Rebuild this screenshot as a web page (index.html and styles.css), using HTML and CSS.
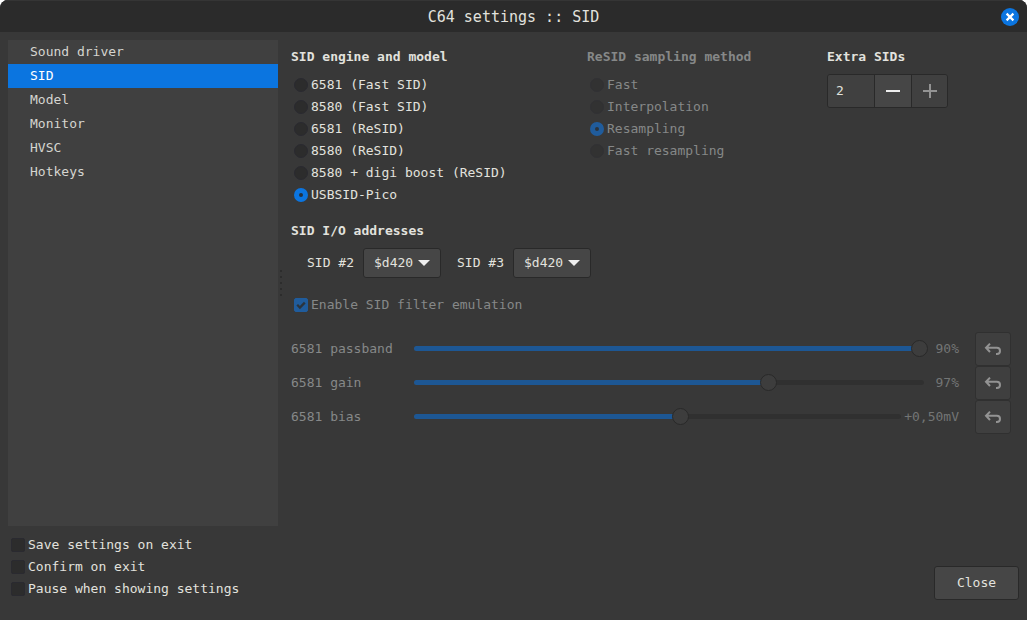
FILE: index.html
```html
<!DOCTYPE html>
<html lang="en">
<head>
<meta charset="utf-8">
<meta name="viewport" content="width=device-width, initial-scale=1">
<title>C64 settings :: SID</title>
<link rel="stylesheet" href="styles.css">
</head>
<body>
<div class="window">
  <header class="titlebar">
    <h1 class="title">C64 settings :: SID</h1>
    <button class="window-close" type="button" aria-label="Close window">
      <svg width="18" height="18" viewBox="0 0 18 18"><circle cx="9" cy="9" r="9" fill="#0b75e0"/><path d="M5.6 5.6l6.8 6.8M12.4 5.6l-6.8 6.8" stroke="#fff" stroke-width="2.2" fill="none"/></svg>
    </button>
  </header>
  <div class="body">
    <nav class="sidebar">
      <button class="nav-item" type="button">Sound driver</button>
      <button class="nav-item selected" type="button">SID</button>
      <button class="nav-item" type="button">Model</button>
      <button class="nav-item" type="button">Monitor</button>
      <button class="nav-item" type="button">HVSC</button>
      <button class="nav-item" type="button">Hotkeys</button>
    </nav>
    <div class="splitter"><i></i><i></i><i></i><i></i><i></i></div>
    <main class="content">
      <div class="columns">
        <section>
          <h2 class="heading">SID engine and model</h2>
          <div class="options">
            <label class="option"><input type="radio" name="engine">6581 (Fast SID)</label>
            <label class="option"><input type="radio" name="engine">8580 (Fast SID)</label>
            <label class="option"><input type="radio" name="engine">6581 (ReSID)</label>
            <label class="option"><input type="radio" name="engine">8580 (ReSID)</label>
            <label class="option"><input type="radio" name="engine">8580 + digi boost (ReSID)</label>
            <label class="option"><input type="radio" name="engine" checked>USBSID-Pico</label>
          </div>
        </section>
        <section class="dim">
          <h2 class="heading">ReSID sampling method</h2>
          <div class="options">
            <label class="option"><input type="radio" name="sampling" disabled>Fast</label>
            <label class="option"><input type="radio" name="sampling" disabled>Interpolation</label>
            <label class="option"><input type="radio" name="sampling" checked disabled>Resampling</label>
            <label class="option"><input type="radio" name="sampling" disabled>Fast resampling</label>
          </div>
        </section>
        <section>
          <h2 class="heading"><label for="extra">Extra SIDs</label></h2>
          <div class="spin">
            <input class="spin-value" id="extra" type="text" value="2">
            <button class="spin-button" type="button" aria-label="Decrease"><svg width="14" height="14" viewBox="0 0 14 14"><path d="M0 7h14" stroke="#eee" stroke-width="2"/></svg></button>
            <button class="spin-button" type="button" aria-label="Increase" disabled><svg width="14" height="14" viewBox="0 0 14 14"><path d="M0 7h14M7 0v14" stroke="#939393" stroke-width="2"/></svg></button>
          </div>
        </section>
      </div>
      <section class="addresses">
        <h2 class="heading">SID I/O addresses</h2>
        <div class="address-row">
          <label class="address-label" for="sid2">SID #2</label>
          <div class="combo"><select id="sid2"><option>$d420</option></select><svg class="arrow" width="12" height="6" viewBox="0 0 12 6"><path d="M0 0h12L6 6z" fill="#eee"/></svg></div>
          <label class="address-label" for="sid3">SID #3</label>
          <div class="combo"><select id="sid3"><option>$d420</option></select><svg class="arrow" width="12" height="6" viewBox="0 0 12 6"><path d="M0 0h12L6 6z" fill="#eee"/></svg></div>
        </div>
      </section>
      <label class="option filter dim"><span class="tick"><input type="checkbox" checked disabled><svg width="14" height="14" viewBox="0 0 14 14"><path d="M3.2 6.8l2.7 2.7 4.9-4.9" stroke="#2b343d" stroke-width="2.3" fill="none"/></svg></span>Enable SID filter emulation</label>
      <div class="sliders dim">
        <div class="slider-row">
          <label class="slider-label" for="passband">6581 passband</label>
          <div class="slider" style="--fill:100%"><input id="passband" type="range" value="100" disabled></div>
          <output class="value" for="passband">90%</output>
          <button class="reset" type="button" aria-label="Reset passband" disabled><svg width="18" height="14" viewBox="0 0 18 14"><path d="M6 1.6L2 5.8 6 10M2 5.8h10.9a3.1 3.1 0 0 1 0 6.2H12" stroke="#939393" stroke-width="2" fill="none"/></svg></button>
        </div>
        <div class="slider-row">
          <label class="slider-label" for="gain">6581 gain</label>
          <div class="slider" style="--fill:69.8%"><input id="gain" type="range" step="any" value="69.8" disabled></div>
          <output class="value" for="gain">97%</output>
          <button class="reset" type="button" aria-label="Reset gain" disabled><svg width="18" height="14" viewBox="0 0 18 14"><path d="M6 1.6L2 5.8 6 10M2 5.8h10.9a3.1 3.1 0 0 1 0 6.2H12" stroke="#939393" stroke-width="2" fill="none"/></svg></button>
        </div>
        <div class="slider-row">
          <label class="slider-label" for="bias">6581 bias</label>
          <div class="slider" style="--fill:54.8%"><input id="bias" type="range" step="any" value="54.8" disabled></div>
          <output class="value" for="bias">+0,50mV</output>
          <button class="reset" type="button" aria-label="Reset bias" disabled><svg width="18" height="14" viewBox="0 0 18 14"><path d="M6 1.6L2 5.8 6 10M2 5.8h10.9a3.1 3.1 0 0 1 0 6.2H12" stroke="#939393" stroke-width="2" fill="none"/></svg></button>
        </div>
      </div>
    </main>
  </div>
  <footer class="footer">
    <div class="options">
      <label class="option"><input type="checkbox">Save settings on exit</label>
      <label class="option"><input type="checkbox">Confirm on exit</label>
      <label class="option"><input type="checkbox">Pause when showing settings</label>
    </div>
    <button class="close" type="button">Close</button>
  </footer>
</div>
</body>
</html>
```
FILE: styles.css
```css
* { box-sizing: border-box; }
body { margin: 0; background: #fff; }
.window {
  min-height: 100vh;
  display: flex;
  flex-direction: column;
  background: #383838;
  color: #e2e2de;
  border-radius: 8px 8px 0 0;
  overflow: hidden;
  font: 13px/22px "DejaVu Sans Mono", monospace;
}
button, input, select { font: inherit; color: inherit; margin: 0; }
button { padding: 0; }
.titlebar {
  height: 32px;
  display: grid;
  grid-template-columns: 1fr auto 1fr;
  align-items: center;
  padding: 0 8px;
  background: #2b2b2b;
  border-top: 1px solid #353535;
}
.title { grid-column: 2; margin: 0; font-size: 15px; font-weight: 400; }
.window-close { justify-self: end; display: flex; border: 0; background: none; }
.body { flex: 1; display: flex; padding: 8px 8px 0; }
.sidebar { width: 270px; display: flex; flex-direction: column; background: #404040; }
.nav-item {
  height: 24px;
  padding: 0 22px;
  border: 0;
  background: none;
  color: #d5d5d0;
  text-align: left;
}
.nav-item.selected { background: #0b75e0; color: #fff; }
.splitter {
  width: 5px;
  display: flex;
  flex-direction: column;
  align-items: center;
  justify-content: center;
  gap: 4px;
}
.splitter i { width: 2px; height: 2px; border-radius: 1px; background: #292929; }
.content { flex: 1; padding: 6px 8px 0; }
.columns { display: grid; grid-template-columns: 296px 240px 1fr; }
.heading { margin: 0 0 6px; font-size: 13px; line-height: 22px; font-weight: 700; }
.option { display: flex; align-items: center; gap: 3px; height: 22px; padding-left: 3px; }
.dim { color: #868888; }
input[type="radio"], input[type="checkbox"] {
  appearance: none;
  display: block;
  width: 14px;
  height: 14px;
  border: 1px solid #2a2a30;
  background: #2c2c2c;
}
input[type="radio"] { border-radius: 50%; }
input[type="checkbox"] { border-radius: 2px; }
input[type="radio"]:disabled { background: #323232; border-color: #313134; }
input[type="radio"]:checked { border: 5px solid #0b75e0; background: #25303c; }
input[type="radio"]:checked:disabled { border-color: #205c9c; background: #2b343d; }
input[type="checkbox"]:checked:disabled { border-color: #205c9c; background: #205c9c; }
.tick { position: relative; }
.tick svg { position: absolute; inset: 0; }
.spin {
  width: 121px;
  height: 34px;
  display: grid;
  grid-template-columns: 46px 37px 36px;
  border: 1px solid #292929;
  border-radius: 3px;
  overflow: hidden;
}
.spin-value { width: 100%; border: 0; padding: 0 8px; background: #404040; }
.spin-button {
  display: flex;
  align-items: center;
  justify-content: center;
  border: 0;
  border-left: 1px solid #292929;
  background: #464646;
}
.spin-button:disabled { background: #404040; }
.addresses { margin-top: 14px; }
.address-row { display: flex; align-items: center; padding-left: 16px; gap: 8px; }
.address-label { width: 48px; }
.combo { position: relative; margin-right: 8px; }
.combo select {
  appearance: none;
  display: block;
  width: 78px;
  height: 30px;
  padding: 0 10px;
  border: 1px solid #292929;
  border-radius: 3px;
  background: #464646;
}
.arrow { position: absolute; right: 11px; top: 12px; pointer-events: none; }
.filter { margin: 16px 0; }
.slider-row { display: flex; align-items: center; }
.slider-label { width: 123px; }
.slider { position: relative; flex: 1; height: 18px; }
.slider::before {
  content: "";
  position: absolute;
  inset: 6px 0 7px;
  border-radius: 3px;
  background: linear-gradient(to right, #1d5794 var(--fill), #303030 var(--fill));
}
.slider input {
  appearance: none;
  position: absolute;
  top: 0;
  left: -4px;
  width: calc(100% + 8px);
  height: 17px;
  background: none;
}
.slider input::-webkit-slider-thumb {
  appearance: none;
  width: 17px;
  height: 17px;
  border: 1px solid #292929;
  border-radius: 50%;
  background: #3d3d3d;
}
.value { min-width: 32px; margin: 0 16px 0 3px; text-align: right; color: #737575; }
.reset {
  width: 36px;
  height: 34px;
  display: flex;
  align-items: center;
  justify-content: center;
  border: 1px solid #303030;
  border-radius: 3px;
  background: #3f3f3f;
}
.footer {
  display: flex;
  align-items: center;
  justify-content: space-between;
  padding: 8px 8px 20px;
}
.footer .option { padding-left: 3px; }
.close {
  width: 85px;
  height: 34px;
  align-self: flex-end;
  border: 1px solid #292929;
  border-radius: 3px;
  background: #464646;
}
```
